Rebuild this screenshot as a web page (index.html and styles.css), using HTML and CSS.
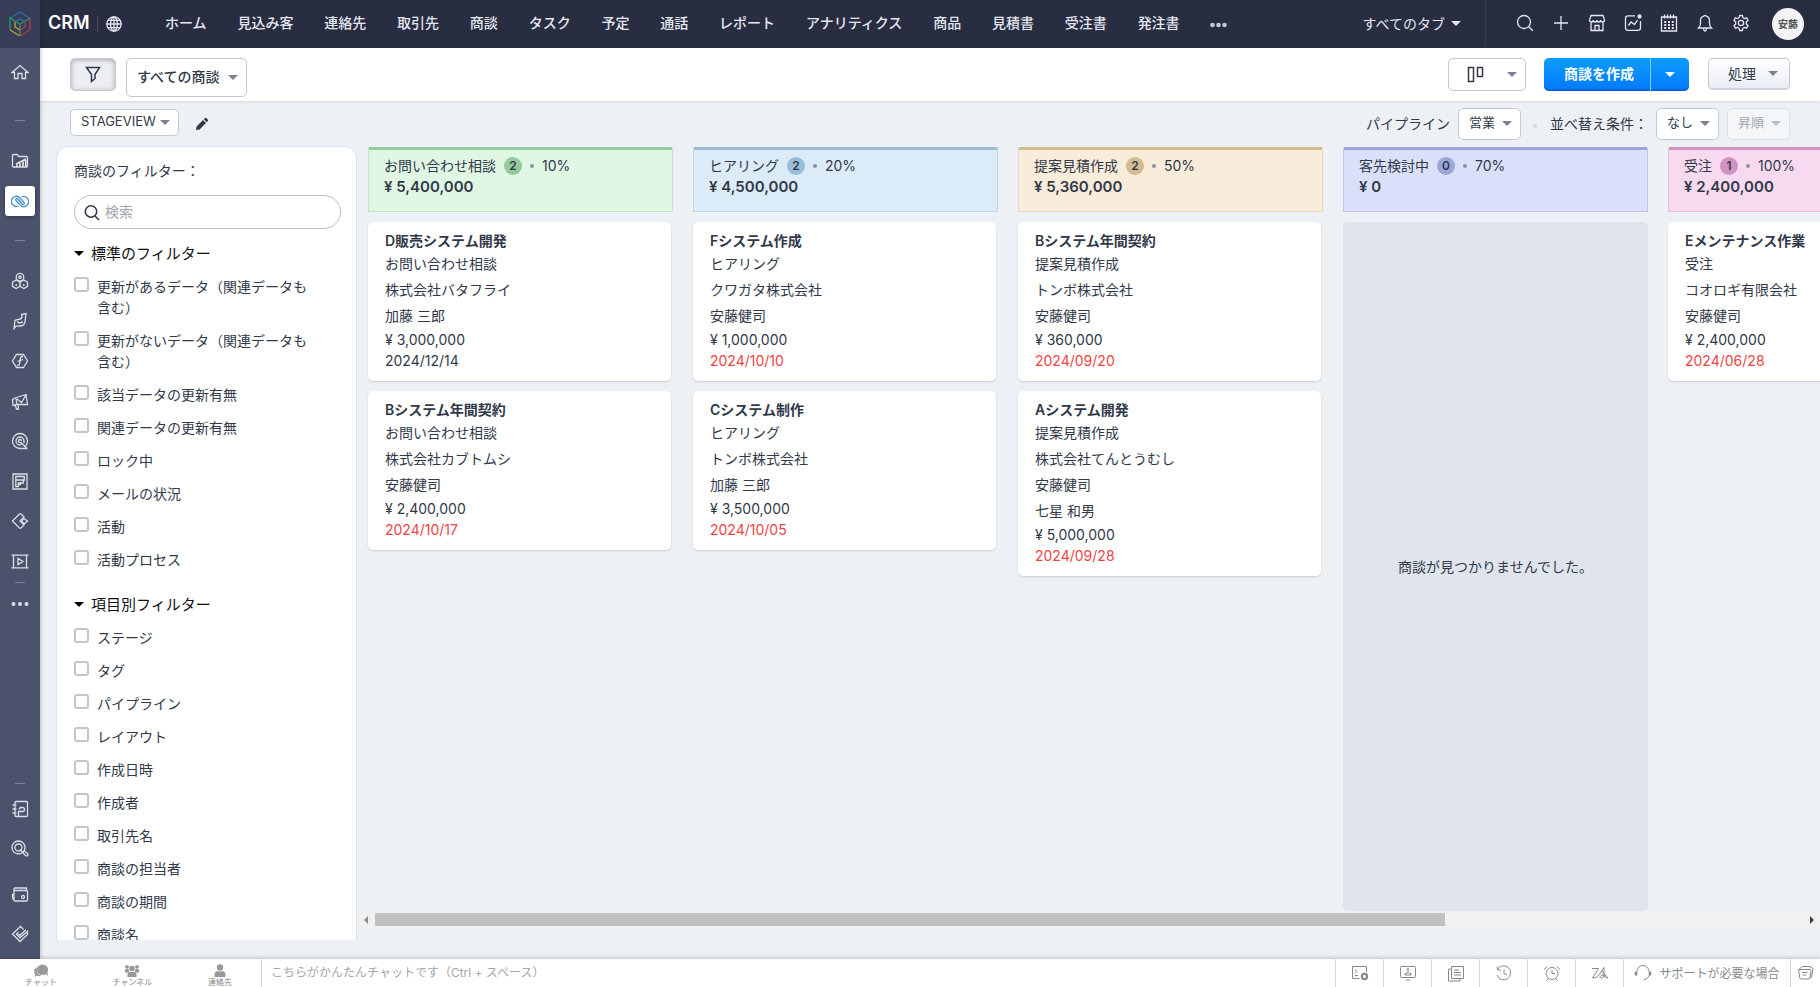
FILE: index.html
```html
<!DOCTYPE html>
<html lang="ja">
<head>
<meta charset="utf-8">
<title>CRM - 商談</title>
<link rel="stylesheet" href="styles.css">
</head>
<body>
<div class="app">
  <aside class="rail">
    <a class="rail-logo" href="#" aria-label="CRM">
      <svg width="24" height="28" viewBox="0 0 24 28" fill="none" stroke-width="1.4">
        <path d="M2 8 12 2l10 6" stroke="#2a6fae"/><path d="M22 8v12l-10 6" stroke="#b03a4a"/><path d="M12 26 2 20" stroke="#c9a13b"/><path d="M2 20V8l10 6" stroke="#2f9a63"/><path d="M22 8l-10 6v12" stroke="#2f9a63"/>
        <path d="M7 12l5-3 5 3" stroke="#2a6fae"/><path d="M17 12v5l-5 3" stroke="#b03a4a"/><path d="M12 20l-5-3v-5" stroke="#c9a13b"/>
      </svg>
    </a>
    <nav class="rail-top" aria-label="メニュー">
      <a class="rail-item home" href="#" aria-label="ホーム"><svg width="18" height="16" viewBox="0 0 18 16"><path d="M1 8.500 9 1.500l8 7H14.500v6H11V9.500H7v5H3.500v-6z"/></svg></a>
      <i class="dash wide"></i>
      <a class="rail-item" href="#" aria-label="レポート"><svg width="18" height="16" viewBox="0 0 18 16"><path d="M1.500 13V2.500Q1.500 1.500 2.500 1.500H6l2 2h7.500q1 0 1 1V13q0 1-1 1h-13q-1 0-1-1z"/><path d="M6 14v-2.500M9 14v-4M12 14V8.500M14.800 14V7M5 11l10-5" stroke-width="1.800"/></svg></a>
      <a class="rail-item active" href="#" aria-label="商談"><svg width="18" height="13" viewBox="0 0 18 13"><path d="M7.500 11a5 5 0 1 1 1-8.500L13 7.500q.8 1.200-.2 1.800-1 .5-1.700-.3L7.500 5M10.500 2a5 5 0 1 1-1 8.500L5 5.500q-.8-1.200.2-1.800 1-.5 1.700.3L10.500 8"/></svg></a>
      <i class="dash wide"></i>
      <a class="rail-item" href="#" aria-label="商品"><svg width="18" height="18" viewBox="0 0 18 18"><circle cx="9" cy="5.200" r="3.800"/><circle cx="9" cy="5.200" r="1.200"/><path d="M5.200 8l3.700 2.200v4L5.200 16.500l-3.700-2.200v-4.100zM12.800 8l3.700 2.200v4.100l-3.700 2.200-3.700-2.200v-4.100zM5.200 12v2M12.800 12v2"/></svg></a>
      <a class="rail-item" href="#" aria-label="営業"><svg width="16" height="18" viewBox="0 0 16 18"><path d="M9.500 2.500l4.500-1-1 8.500q-1 4-5 4l-4 .2-2 2.500 1-8.500 3.500-.7q3.500-.5 3.500-3zM5 9.500l2 1.500 4-1"/></svg></a>
      <a class="rail-item" href="#" aria-label="関数"><svg width="18" height="16" viewBox="0 0 18 16"><path d="M5.500 1.500h7l4 6.500-4 6.500h-7L1.500 8zM12 3.500c-2.500 0-2.500 1-3 4.500s-.5 4.500-3 4.500M6.500 8.500 12 6.500"/></svg></a>
      <a class="rail-item" href="#" aria-label="キャンペーン"><svg width="18" height="17" viewBox="0 0 18 17"><path d="M1.500 6.500 4 5l11-3.500 1.500 10L5 11.500 2 12.500zM5 5.500l1 6M6 6l4.500 3.500L15 2M4 12l1.500 4h2L7 12"/></svg></a>
      <a class="rail-item" href="#" aria-label="検索"><svg width="18" height="18" viewBox="0 0 18 18"><path d="M16.500 16.500H9A7.500 7.500 0 1 1 16.500 9c0 2-1 4-2 5M9.500 10l6.500 6.500"/><path d="M9 13a4 4 0 1 1 4-4M9 10.500A1.500 1.500 0 1 1 10.500 9M9 13l1.500-1.500M13 9v2"/></svg></a>
      <a class="rail-item" href="#" aria-label="フォーム"><svg width="16" height="17" viewBox="0 0 16 17"><path d="M1 1h14v15H1zM3.800 3.500h8.500V7H3.800zM3.800 7v6.500h2.500V10h5V7M6.300 11.500H9"/></svg></a>
      <a class="rail-item" href="#" aria-label="タグ"><svg width="18" height="18" viewBox="0 0 18 18"><path d="M1.500 9 8.500 2q.8-.6 1.600 0L13 5 9 9l4 4-3 3q-.8.600-1.600 0z"/><path d="M13 6.500 16.500 9 13 12 10.500 9z"/></svg></a>
      <a class="rail-item" href="#" aria-label="動画"><svg width="18" height="15" viewBox="0 0 18 15"><path d="M.5 1.200h17M.5 13.800h17M2.500 1.500v12M15.500 1.500v12M7 4.500v6l5-3z"/></svg></a>
      <i class="dash tight"></i>
      <a class="rail-more" href="#" aria-label="その他"><svg width="18" height="6" viewBox="0 0 18 6"><g fill="#dcdee6" stroke="none"><circle cx="2.500" cy="3" r="2"/><circle cx="9" cy="3" r="2"/><circle cx="15.500" cy="3" r="2"/></g></svg></a>
    </nav>
    <nav class="rail-bottom" aria-label="ツール">
      <i class="dash"></i>
      <a class="rail-item first" href="#" aria-label="連絡帳"><svg width="17" height="18" viewBox="0 0 17 18"><path d="M3 5V2.500Q3 1.500 4 1.500h10.500q1 0 1 1v13q0 1-1 1H4q-1 0-1-1V13M.5 5h4M.5 9h4M.5 13h4M3 6v6M6.500 16v-4.500h4q2 0 2-2t-2-2h-1.500q-1.500 0-1.500 2"/></svg></a>
      <a class="rail-item" href="#" aria-label="調査"><svg width="18" height="18" viewBox="0 0 18 18"><circle cx="7.500" cy="7.500" r="6.500"/><circle cx="7.500" cy="7.500" r="3.500"/><path d="M9 9.500l5.500 6q1.500 1 2.200-.2t-.5-2l-3.500-3"/></svg></a>
      <a class="rail-item low" href="#" aria-label="ウォレット"><svg width="18" height="15" viewBox="0 0 18 15"><path d="M3 4V2q0-1 1-1h11.500v2.500M3 3.500h12.500q1 0 1 1V13q0 1-1 1H4q-1 0-1-1zM3 7.500H1.500V11L3 13"/><circle cx="12" cy="10" r="1.500"/></svg></a>
      <a class="rail-item" href="#" aria-label="承認"><svg width="18" height="18" viewBox="0 0 18 18"><path d="M12.500 4.500 9.500 1.500 1.500 9 9 16.500l7.500-7V6.500L9 12.800 5.500 9.200l2-2M7.500 9 9 10.300l6-5.500"/></svg></a>
    </nav>
  </aside>

  <header class="topbar">
    <strong class="brand">CRM</strong>
    <button class="icon-btn globe" aria-label="言語"><svg width="16" height="16" viewBox="0 0 16 16"><circle cx="8" cy="8" r="7.200"/><ellipse cx="8" cy="8" rx="3.400" ry="7.200"/><path d="M8 .8v14.400M.8 8h14.400M1.800 4.300h12.400M1.800 11.700h12.400"/></svg></button>
    <nav class="tabs">
      <a href="#">ホーム</a><a href="#">見込み客</a><a href="#">連絡先</a><a href="#">取引先</a><a href="#">商談</a><a href="#">タスク</a><a href="#">予定</a><a href="#">通話</a><a href="#">レポート</a><a href="#">アナリティクス</a><a href="#">商品</a><a href="#">見積書</a><a href="#">受注書</a><a href="#">発注書</a>
      <a href="#" class="more" aria-label="その他"><svg width="17" height="6" viewBox="0 0 17 6"><circle cx="2.500" cy="3" r="2.300"/><circle cx="8.500" cy="3" r="2.300"/><circle cx="14.500" cy="3" r="2.300"/></svg></a>
    </nav>
    <button class="all-tabs">すべてのタブ<i class="caret"></i></button>
    <div class="tools">
      <button class="icon-btn" aria-label="検索"><svg width="18" height="18" viewBox="0 0 18 18"><circle cx="8" cy="8" r="6.500"/><path d="M12.800 12.800l4 4"/></svg></button>
      <button class="icon-btn" aria-label="追加"><svg width="18" height="18" viewBox="0 0 18 18"><path d="M9 2v14M2 9h14"/></svg></button>
      <button class="icon-btn" aria-label="ストア"><svg width="18" height="18" viewBox="0 0 18 18"><path d="M3 1.500h12l1.500 4.500q0 2-1.900 2t-1.900-2q0 2-1.850 2T9 6q0 2-1.850 2T5.300 6q0 2-1.900 2T1.500 6zM3 8v8.500h12V8M7 16.500V11.500h4v5"/></svg></button>
      <button class="icon-btn" aria-label="分析"><svg width="18" height="18" viewBox="0 0 18 18"><path d="M11 1.800H4q-2.500 0-2.500 2.500v9.500q0 2.500 2.500 2.500h10q2.500 0 2.500-2.500V7M4.500 11.500 7 8l3.500 2.500L13.500 6"/><circle cx="15.500" cy="2.500" r="1.500" fill="#fff"/></svg></button>
      <button class="icon-btn" aria-label="カレンダー"><svg width="18" height="18" viewBox="0 0 18 18"><path d="M1.500 3h15v14h-15zM4.500.5v4M7.500.5v4M10.500.5v4M13.500.5v4"/><path d="M4.200 8h2M8 8h2M11.800 8h2M4.200 11h2M8 11h2M11.800 11h2M4.200 14h2M8 14h2M11.800 14h2" stroke-width="2"/></svg></button>
      <button class="icon-btn" aria-label="通知"><svg width="18" height="18" viewBox="0 0 18 18"><path d="M2.500 14h13q-2-2-2-4.500V7q0-4-3.200-4.800Q9 .5 7.700 2.200 4.500 3 4.500 7v2.500q0 2.500-2 4.500zM7.500 14.500Q7.800 17 9 17t1.500-2.500"/></svg></button>
      <button class="icon-btn" aria-label="設定"><svg width="18" height="18" viewBox="0 0 18 18"><circle cx="9" cy="9" r="2.600"/><path d="M7.600 1.500h2.800l.5 2.200 1.500.9 2.200-.7 1.400 2.500-1.700 1.500v2.200l1.700 1.500-1.400 2.500-2.200-.7-1.500.9-.5 2.200H7.600l-.5-2.200-1.500-.9-2.200.7L2 11.600l1.700-1.500V7.900L2 6.400l1.400-2.500 2.200.7 1.500-.9z"/></svg></button>
    </div>
    <button class="avatar">安藤</button>
  </header>

  <main class="main">
    <div class="actions">
      <button class="btn filter-btn" aria-label="フィルター"><svg width="16" height="17" viewBox="0 0 16 17"><path d="M1.500 1.500h13L10 8.500v4L6.500 15.500v-7z"/></svg></button>
      <label class="pick view-pick"><select aria-label="ビュー"><option>すべての商談</option></select><i class="caret"></i></label>
      <div class="spacer"></div>
      <button class="btn kanban-btn" aria-label="カンバン表示"><svg width="18" height="17" viewBox="0 0 18 17"><path d="M1.500 1.500h5v14h-5zM10.500 1.500h5v9h-5z"/></svg><i class="caret"></i></button>
      <div class="create"><button class="create-main">商談を作成</button><button class="create-more" aria-label="作成メニュー"><i class="caret"></i></button></div>
      <button class="btn process-btn">処理<i class="caret"></i></button>
    </div>

    <div class="options">
      <label class="pick stage-pick"><select aria-label="表示設定"><option>STAGEVIEW</option></select><i class="caret"></i></label>
      <button class="edit" aria-label="編集"><svg width="14" height="14" viewBox="0 0 14 14"><path d="M1 13l.6-3.600L8 3l3 3-6.400 6.400zM8.800 2.200l1-1q.8-.7 1.600 0l1.400 1.400q.7.800 0 1.600l-1 1z"/></svg></button>
      <div class="spacer"></div>
      <label class="opt-label" for="pipeline">パイプライン</label>
      <span class="pick small-pick"><select id="pipeline"><option>営業</option></select><i class="caret"></i></span>
      <i class="dot"></i>
      <label class="opt-label" for="sort">並べ替え条件：</label>
      <span class="pick small-pick"><select id="sort"><option>なし</option></select><i class="caret"></i></span>
      <span class="pick small-pick off"><select aria-label="並び順" disabled><option>昇順</option></select><i class="caret"></i></span>
    </div>

    <div class="work">
      <section class="filters">
        <h2>商談のフィルター：</h2>
        <div class="search"><svg width="16" height="17" viewBox="0 0 16 17"><circle cx="7" cy="7.500" r="5.700"/><path d="M11 12l4 4"/></svg><input type="text" placeholder="検索" aria-label="検索"></div>
        <h3><i class="caret"></i>標準のフィルター</h3>
        <label class="check"><input type="checkbox"><span>更新があるデータ（関連データも含む）</span></label>
        <label class="check"><input type="checkbox"><span>更新がないデータ（関連データも含む）</span></label>
        <label class="check"><input type="checkbox"><span>該当データの更新有無</span></label>
        <label class="check"><input type="checkbox"><span>関連データの更新有無</span></label>
        <label class="check"><input type="checkbox"><span>ロック中</span></label>
        <label class="check"><input type="checkbox"><span>メールの状況</span></label>
        <label class="check"><input type="checkbox"><span>活動</span></label>
        <label class="check"><input type="checkbox"><span>活動プロセス</span></label>
        <h3><i class="caret"></i>項目別フィルター</h3>
        <label class="check"><input type="checkbox"><span>ステージ</span></label>
        <label class="check"><input type="checkbox"><span>タグ</span></label>
        <label class="check"><input type="checkbox"><span>パイプライン</span></label>
        <label class="check"><input type="checkbox"><span>レイアウト</span></label>
        <label class="check"><input type="checkbox"><span>作成日時</span></label>
        <label class="check"><input type="checkbox"><span>作成者</span></label>
        <label class="check"><input type="checkbox"><span>取引先名</span></label>
        <label class="check"><input type="checkbox"><span>商談の担当者</span></label>
        <label class="check"><input type="checkbox"><span>商談の期間</span></label>
        <label class="check"><input type="checkbox"><span>商談名</span></label>
      </section>

      <section class="board-area">
        <div class="board">
          <div class="column">
            <div class="stage green"><div class="stage-top">お問い合わせ相談<b>2</b><i></i>10%</div><div class="total">¥ 5,400,000</div></div>
            <article class="card"><h4>D販売システム開発</h4><p>お問い合わせ相談</p><p>株式会社バタフライ</p><p>加藤 三郎</p><p class="num">¥ 3,000,000</p><p class="num">2024/12/14</p></article>
            <article class="card"><h4>Bシステム年間契約</h4><p>お問い合わせ相談</p><p>株式会社カブトムシ</p><p>安藤健司</p><p class="num">¥ 2,400,000</p><p class="num late">2024/10/17</p></article>
          </div>
          <div class="column">
            <div class="stage blue"><div class="stage-top">ヒアリング<b>2</b><i></i>20%</div><div class="total">¥ 4,500,000</div></div>
            <article class="card"><h4>Fシステム作成</h4><p>ヒアリング</p><p>クワガタ株式会社</p><p>安藤健司</p><p class="num">¥ 1,000,000</p><p class="num late">2024/10/10</p></article>
            <article class="card"><h4>Cシステム制作</h4><p>ヒアリング</p><p>トンボ株式会社</p><p>加藤 三郎</p><p class="num">¥ 3,500,000</p><p class="num late">2024/10/05</p></article>
          </div>
          <div class="column">
            <div class="stage tan"><div class="stage-top">提案見積作成<b>2</b><i></i>50%</div><div class="total">¥ 5,360,000</div></div>
            <article class="card"><h4>Bシステム年間契約</h4><p>提案見積作成</p><p>トンボ株式会社</p><p>安藤健司</p><p class="num">¥ 360,000</p><p class="num late">2024/09/20</p></article>
            <article class="card"><h4>Aシステム開発</h4><p>提案見積作成</p><p>株式会社てんとうむし</p><p>安藤健司</p><p>七星 和男</p><p class="num">¥ 5,000,000</p><p class="num late">2024/09/28</p></article>
          </div>
          <div class="column">
            <div class="stage violet"><div class="stage-top">客先検討中<b>0</b><i></i>70%</div><div class="total">¥ 0</div></div>
            <div class="empty">商談が見つかりませんでした。</div>
          </div>
          <div class="column">
            <div class="stage pink"><div class="stage-top">受注<b>1</b><i></i>100%</div><div class="total">¥ 2,400,000</div></div>
            <article class="card"><h4>Eメンテナンス作業</h4><p>受注</p><p>コオロギ有限会社</p><p>安藤健司</p><p class="num">¥ 2,400,000</p><p class="num late">2024/06/28</p></article>
          </div>
        </div>
        <div class="hscroll"><i class="arrow left"></i><div class="track"><div class="thumb"></div></div><i class="arrow right"></i></div>
      </section>
    </div>
  </main>

  <footer class="dock">
    <div class="dock-tabs">
      <button><svg width="16" height="13" viewBox="0 0 16 13"><ellipse cx="9.500" cy="5.800" rx="5.600" ry="5.200"/><path d="M12 9.500l3 2.500-.7-4zM3.800 3Q.8 5 1.200 8q.2 1.300 1 2.200L1.500 12.700l2.800-1q2.200.8 4.200.1Q3 10.500 3.800 3z"/></svg>チャット</button>
      <button><svg width="16" height="13" viewBox="0 0 16 13"><circle cx="3" cy="2.800" r="1.900"/><circle cx="13" cy="2.800" r="1.900"/><circle cx="8" cy="4.500" r="2.800"/><path d="M1 8.500V6q0-1 1-1h2.500l.8 2.500-1.500 1zM15 8.500V6q0-1-1-1h-2.500l-.8 2.500 1.500 1zM3.500 13v-3Q3.500 8 5.500 8h5q2 0 2 2v3z"/></svg>チャンネル</button>
      <button><svg width="14" height="13" viewBox="0 0 14 13"><circle cx="7" cy="3.500" r="3.200"/><path d="M1.500 13v-2.500q0-3 3-3.500Q7 8.200 9.500 7q3 .5 3 3.500V13z"/></svg>連絡先</button>
    </div>
    <input class="chat" type="text" placeholder="こちらがかんたんチャットです（Ctrl + スペース）" aria-label="チャット">
    <div class="dock-tools">
      <button aria-label="コマンド"><svg width="18" height="16" viewBox="0 0 18 16"><path d="M8.500 13.500H1.500V1.500h14V7M4 4.500l2 2L4 8.500M4 10.500h3"/><circle cx="13.500" cy="11.500" r="2.700" stroke-width="2"/></svg></button>
      <button aria-label="画面共有"><svg width="18" height="16" viewBox="0 0 18 16"><path d="M2.500 1.500h13q1 0 1 1v9q0 1-1 1h-13q-1 0-1-1v-9q0-1 1-1zM7 15h4"/><circle cx="9" cy="4.500" r="1"/><path d="M6 10V8.500h2L9 6.500l1.500 2H12V10z"/></svg></button>
      <button aria-label="メモ"><svg width="18" height="17" viewBox="0 0 18 17"><path d="M4.500 1.500h12v12h-12zM4.500 4H1.500v12H13v-2.500M7 5h5M7 7.500h7M7 10h7"/></svg></button>
      <button aria-label="履歴"><svg width="17" height="16" viewBox="0 0 17 16"><path d="M2.500 4.500A7 7 0 1 1 2 10M2 1.500l.5 3.500H6M9 4.500v4l3 1.500"/></svg></button>
      <button aria-label="リマインダー"><svg width="18" height="17" viewBox="0 0 18 17"><circle cx="9" cy="8.500" r="6"/><path d="M9 5v3.500h3M1 4.500 4.500 1.500M17 4.500 13.500 1.500M5 13.500l-1.500 2.500M13 13.500l1.500 2.500"/></svg></button>
      <button aria-label="Zia"><svg width="18" height="14" viewBox="0 0 18 14"><path d="M1 2.500h6.500L1.500 12q4 .5 7-3.500l4.500-7v9.500M11 5l6 7q-2 .5-3-1.500-1.500-3-4-1-2 2.500.5 2.500t3.500-4"/></svg></button>
      <button class="support"><svg width="18" height="17" viewBox="0 0 18 17"><path d="M3 6.500a6 6 0 0 1 12 0M15 10.500q-1 4-5.500 4.500"/><path d="M2 6.500v4M16 6.500v4" stroke-width="2.500"/></svg>サポートが必要な場合</button>
      <button class="last" aria-label="ごみ箱"><svg width="17" height="16" viewBox="0 0 17 16"><path d="M1.500 4.500h11.500q1 0 1 1l-1 7.500q-.3 1-1.300 1H4q-1 0-1.200-1zM2.500 4 5 1.500h8l3 2-1.500 8.500-1.500 1.500M5 7.500h5.500M5.500 10h4"/></svg></button>
    </div>
  </footer>
</div>
</body>
</html>
```
FILE: styles.css
```css
* { box-sizing: border-box; }
html, body { height: 100%; margin: 0; }
body {
  font-family: Inter, "Noto Sans CJK JP", sans-serif;
  font-size: 14px;
  line-height: 21px;
  color: #313949;
  background: #edf0f4;
  overflow: hidden;
}
button, input, select { font: inherit; color: inherit; margin: 0; }
button { border: 0; padding: 0; background: none; }
a { color: inherit; text-decoration: none; }
h2, h3, h4, p { margin: 0; font-size: inherit; font-weight: 400; }
svg { display: block; flex: none; fill: none; stroke: currentColor; }
.caret {
  flex: none;
  border: 5px solid transparent;
  border-top: 5px solid #7b8190;
  border-bottom: 0;
}

.app {
  height: 100vh;
  display: grid;
  grid-template: "rail top" 48px "rail main" minmax(0, 1fr) "dock dock" 28px / 40px minmax(0, 1fr);
}

/* Side rail */
.rail {
  grid-area: rail;
  display: flex;
  flex-direction: column;
  background: #4b526b;
  color: #dcdee6;
  box-shadow: 1px 0 4px rgba(0, 0, 0, .2);
  z-index: 1;
}
.rail svg { stroke-width: 1.3; }
.rail-logo { height: 48px; display: grid; place-items: center; background: #383d57; }
.rail-top { display: flex; flex-direction: column; align-items: center; padding-top: 4px; }
.rail-bottom { margin-top: auto; display: flex; flex-direction: column; align-items: center; padding-bottom: 5px; }
.rail-item { width: 30px; height: 30px; margin: 5px 0; display: grid; place-items: center; }
.rail-item.active { background: #fff; border-radius: 3px; color: #4a90c8; box-shadow: 0 1px 4px rgba(0, 0, 0, .3); }
.rail-item.low { margin-top: 10px; }
.rail-item.first { margin-top: 10px; }
.dash { width: 10px; height: 1px; background: #7d8397; }
.dash.wide { margin: 19px 0 20px; }
.home { margin-bottom: 14px; }
.dash.tight { margin-top: 1px; }
.rail-more { margin-top: 18px; }

/* Top bar */
.topbar { grid-area: top; display: flex; align-items: center; background: #282d42; color: #e4e7f0; padding: 0 16px 0 7px; }
.brand { width: 50px; font-size: 18px; font-weight: 600; color: #fff; padding: 0 0 4px 1px; }
.globe { border-left: 1px solid #4a4f62; height: 16px; padding-left: 8px; }
.tabs { flex: 1; display: flex; justify-content: space-between; align-items: center; margin: 0 135px 4px 43px; font-weight: 500; white-space: nowrap; }
.tabs .more svg { fill: #c3c7d2; stroke: none; }
.tabs .more { padding-top: 6px; }
.all-tabs { display: flex; align-items: center; gap: 6px; padding-bottom: 2px; white-space: nowrap; }
.all-tabs .caret { border-top-color: #e4e7f0; }
.tools { display: flex; gap: 18px; align-items: center; height: 48px; border-left: 1px solid #363b50; margin-left: 24px; padding: 0 22px 2px 30px; }
.icon-btn svg { stroke-width: 1.3; }
.avatar { width: 32px; height: 32px; border-radius: 50%; background: #f4f4f4; color: #555; font-size: 10px; font-weight: 600; }

/* Action bars */
.main { grid-area: main; display: flex; flex-direction: column; min-width: 0; }
.spacer { flex: 1; }
.actions { flex: none; height: 53px; display: flex; align-items: flex-start; padding: 10px 30px 0; background: #fff; box-shadow: 0 1px 3px rgba(0, 0, 0, .1); }
.btn { display: flex; align-items: center; justify-content: center; height: 33px; border: 1px solid #c4c8d0; border-radius: 5px; background: #fff; }
.btn svg { stroke-width: 1.5; }
.filter-btn { width: 46px; background: #eceef4; box-shadow: inset 0 1px 5px rgba(0, 0, 0, .3); }
.kanban-btn { width: 78px; gap: 22px; padding-left: 9px; }
.create { display: flex; height: 33px; margin: 0 19px 0 18px; border-radius: 5px; background: linear-gradient(#0c9dfb, #0279ff); box-shadow: inset 0 -2px #0264d6; color: #fff; }
.create-main { width: 106px; padding: 0 0 2px 4px; font-weight: 700; }
.create-more { width: 39px; border-left: 1px solid #8ec8ff; display: grid; place-items: center; }
.create .caret { border-top-color: #fff; }
.process-btn { width: 82px; height: 32px; gap: 12px; padding-left: 8px; background: linear-gradient(#fff, #e9ecf4); border-bottom: 2px solid #cdd1df; }
.pick { position: relative; display: flex; align-items: center; }
.pick select { appearance: none; width: 100%; height: 100%; border: 1px solid #c4c8d0; border-radius: 5px; background: #fff; padding: 0 0 2px 10px; opacity: 1; }
.pick .caret { position: absolute; right: 9px; pointer-events: none; }
.view-pick { width: 121px; height: 39px; margin-left: 10px; font-weight: 500; }
.options { flex: none; height: 45px; display: flex; align-items: center; padding: 0 30px; }
.stage-pick { width: 109px; height: 27px; font-size: 13px; margin-bottom: 2px; }
.edit { margin-left: 16px; }
.edit svg { fill: #313949; stroke: none; }
.opt-label { white-space: nowrap; }
.small-pick { width: 63px; height: 32px; margin-left: 8px; font-size: 13px; }
.off { color: #a3a8b1; }
.off select { background: #f5f6f8; border-color: #dcdfe4; }
.off .caret { border-top-color: #b9bcc4; }
.dot { width: 4px; height: 4px; border-radius: 50%; background: #d4d8de; margin: 4px 13px 0 12px; }

/* Filter panel */
.work { flex: 1; min-height: 0; display: flex; }
.filters { flex: none; width: 301px; margin: 0 0 19px 16px; padding: 13px 15px 0 17px; overflow: hidden; background: #fff; border: 1px solid #dbe3ee; border-bottom: 0; border-radius: 12px 12px 0 0; }
.search { display: flex; align-items: center; gap: 5px; height: 34px; margin: 14px 0; padding: 0 9px; border: 1px solid #b9bdc6; border-radius: 17px; }
.search svg { stroke-width: 1.6; }
.search input { flex: 1; min-width: 0; border: 0; outline: 0; padding: 0 0 2px; background: none; }
.search input::placeholder { color: #a0a5ae; }
.filters h3 { display: flex; align-items: center; gap: 7px; font-size: 15px; color: #111; margin-bottom: 12px; }
.filters h3 .caret { border-top-color: #000; }
.check { display: flex; align-items: flex-start; gap: 8px; margin-bottom: 12px; padding-right: 25px; }
.check input { appearance: none; flex: none; width: 15px; height: 15px; margin-top: 1px; border: 2px solid #c2c6cd; border-radius: 3px; background: #fff; }
.check + h3 { margin-top: 24px; }

/* Stage board */
.board-area { flex: 1; min-width: 0; display: flex; flex-direction: column; margin-bottom: 31px; }
.board { flex: 1; min-height: 0; display: flex; gap: 20px; overflow: hidden; padding: 1px 0 0 11px; }
.column { flex: none; width: 305px; display: flex; flex-direction: column; gap: 10px; }
.stage { height: 65px; padding: 5px 15px; border: 1px solid; border-top-width: 3px; border-radius: 2px 2px 0 0; }
.stage-top { display: flex; align-items: center; }
.stage b { width: 18px; height: 18px; margin-left: 8px; border-radius: 50%; font-size: 12px; font-weight: 600; line-height: 18px; text-align: center; }
.stage i { width: 4px; height: 4px; margin: 1px 8px 0; border-radius: 50%; background: #8c939c; }
.total { font-size: 15px; font-weight: 600; }
.green { background: #e0f7e4; border-color: #94ca9c #c3e4c9 #c3e4c9; }
.green b { background: #94ca9c; }
.blue { background: #dbecf8; border-color: #9abdd8 #c0d8ea #c0d8ea; }
.blue b { background: #9abdd8; }
.tan { background: #f8ecda; border-color: #d2bb91 #e8d9bd #e8d9bd; }
.tan b { background: #d2bb91; }
.violet { background: #dbe0fa; border-color: #9aa6d8 #bfc7eb #bfc7eb; }
.violet b { background: #9aa6d8; }
.pink { background: #f7d9f0; border-color: #d094c3 #e8bfe0 #e8bfe0; }
.pink b { background: #d094c3; }
.card { width: 303px; padding: 8px 17px 10px; border-radius: 5px; background: #fff; box-shadow: 0 1px 2px rgba(0, 0, 0, .15); }
.card h4 { font-weight: 600; }
.card p { line-height: 26px; }
.card .num { line-height: 21px; }
.card .late { color: #ee4444; }
.empty { flex: 1; display: grid; place-items: center; border-radius: 5px; background: #e0e4ec; }
.hscroll { flex: none; height: 17px; display: flex; align-items: center; justify-content: space-between; margin-left: 3px; padding: 0 6px 0 4px; background: #f1f1f1; }
.arrow { border: 4px solid transparent; }
.left { border-left: 0; border-right-color: #8a8a8a; }
.right { border-right: 0; border-left-color: #444; }
.track { flex: 1; margin: 0 8px 0 7px; height: 13px; }
.thumb { width: 75%; height: 100%; background: #c1c1c1; }

/* Dock */
.dock { grid-area: dock; display: flex; background: #fff; color: #85888c; box-shadow: 0 -1px 4px rgba(0, 0, 0, .2); z-index: 2; }
.dock-tabs { width: 262px; display: flex; justify-content: space-between; padding: 0 29px 0 25px; border-right: 1px solid #d8d8d8; }
.dock-tabs button { display: flex; flex-direction: column; align-items: center; padding-top: 5px; font-size: 8px; line-height: 10px; }
.dock-tabs svg { fill: #999; stroke: none; }
.chat { flex: 1; min-width: 0; border: 0; outline: 0; padding: 0 9px 2px; font-size: 12px; background: none; }
.chat::placeholder { color: #a4a6aa; }
.dock-tools { display: flex; font-size: 12px; }
.dock-tools button { width: 48px; border-left: 1px solid #d8d8d8; display: flex; align-items: center; justify-content: center; gap: 7px; white-space: nowrap; }
.dock-tools .support { width: 167px; }
.dock-tools .last { width: 30px; }
```
